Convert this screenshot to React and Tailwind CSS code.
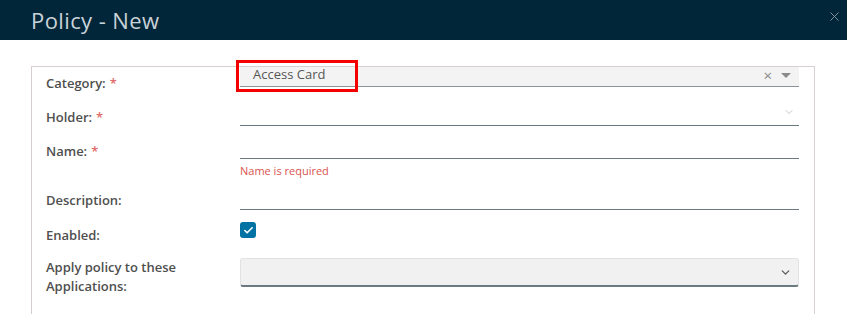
import { Check, ChevronDown, X } from 'lucide-react';

const font = { fontFamily: '"Open Sans", Lato, sans-serif' };

function Label({ children, required, pt }) {
  return (
    <div className={`w-[194px] shrink-0 text-[13px] font-semibold leading-[19px] text-[#4f4f4f] ${pt}`}>
      {children}
      {required && <span className="ml-1 text-[#e06c6c]">*</span>}
    </div>
  );
}

export default function App() {
  return (
    <div className="h-[314px] w-[847px] overflow-hidden bg-white" style={font}>
      <header className="flex h-[40px] items-center justify-between bg-[#012639] pl-[31px] pr-[5px]">
        <h1 className="text-[22px] font-normal tracking-[0.4px] text-[#c9d2d8]">Policy - New</h1>
        <X className="mb-[8px] h-[15px] w-[15px] text-[#8b98a0]" strokeWidth={1.5} />
      </header>

      <div className="pl-[31px] pr-[32px] pt-[26px]">
        <div className="h-[260px] border border-b-0 border-[#d8cfd2] pl-[14px] pr-[15px]">
          {/* Category */}
          <div className="flex h-[20px] items-start">
            <Label required pt="pt-[7px]">Category:</Label>
            <div className="relative flex h-[20px] flex-1 items-center justify-between border-b border-[#8c9296] bg-[#f3f3f3] pb-[3px] pl-[13px] pr-[8px] text-[13px] text-[#565656]">
              <span>Access Card</span>
              <div className="flex items-center gap-[9px] text-[#8a8a8a]">
                <span className="text-[15px] leading-none">×</span>
                <span className="h-0 w-0 border-x-[5px] border-t-[5px] border-x-transparent border-t-[#8a8a8a]" />
              </div>
              <div className="pointer-events-none absolute left-[-4px] top-[-7px] h-[32px] w-[122px] border-[3px] border-[#f50000]" />
            </div>
          </div>

          {/* Holder */}
          <div className="mt-[13px] flex h-[26px] items-start">
            <Label required pt="pt-[8px]">Holder:</Label>
            <div className="flex h-[26px] flex-1 items-start justify-end border-b border-[#6b7a80] pr-[4px] pt-[6px]">
              <ChevronDown className="h-[12px] w-[12px] text-[#9aa3a8]" strokeWidth={1.2} />
            </div>
          </div>

          {/* Name */}
          <div className="mt-[8px] flex h-[44px] items-start">
            <Label required pt="pt-[8px]">Name:</Label>
            <div className="flex-1">
              <div className="h-[25px] border-b border-[#6b7a80]" />
              <div className="mt-[5px] text-[11px] leading-[14px] text-[#d9534f]">Name is required</div>
            </div>
          </div>

          {/* Description */}
          <div className="mt-[7px] flex h-[25px] items-start">
            <Label pt="pt-[6px]">Description:</Label>
            <div className="h-[25px] flex-1 border-b border-[#6b7a80]" />
          </div>

          {/* Enabled */}
          <div className="mt-[12px] flex h-[16px] items-start">
            <Label pt="pt-[4px]">Enabled:</Label>
            <div className="flex-1">
              <div className="flex h-[16px] w-[16px] items-center justify-center rounded-[3px] bg-[#0072a3]">
                <Check className="h-[11px] w-[11px] text-white" strokeWidth={3.5} />
              </div>
            </div>
          </div>

          {/* Applications */}
          <div className="mt-[20px] flex h-[29px] items-start">
            <Label pt="pt-0">Apply policy to these Applications:</Label>
            <div className="flex h-[29px] flex-1 items-center justify-end rounded-[3px] border border-b-[2px] border-[#e2e2e2] border-b-[#6b7a80] bg-[#f1f1f1] pr-[6px]">
              <ChevronDown className="h-[13px] w-[13px] text-[#555]" strokeWidth={2.2} />
            </div>
          </div>
        </div>
      </div>
    </div>
  );
}
